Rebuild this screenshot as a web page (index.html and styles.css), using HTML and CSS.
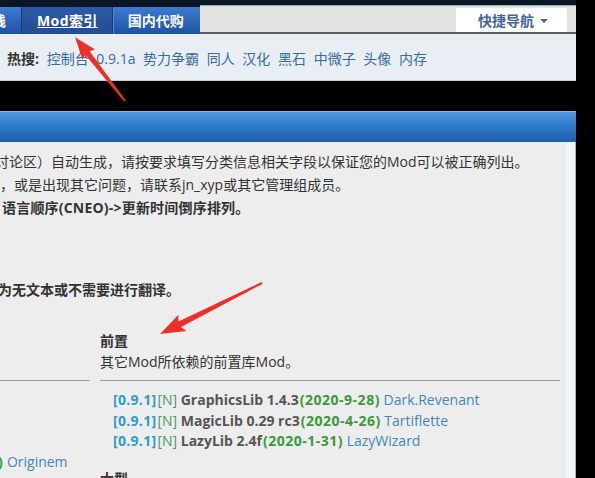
FILE: index.html
```html
<!DOCTYPE html>
<html lang="zh-CN">
<head>
  <meta charset="UTF-8">
  <meta name="viewport" content="width=device-width, initial-scale=1.0">
  <title>Mod索引</title>
  <link rel="stylesheet" href="styles.css">
</head>
<body>
  <div class="page">
    <div class="topline"></div>

    <!-- 主导航 -->
    <div class="nav">
      <ul class="nav-menu">
        <li class="cut"><a href="#">栈</a></li>
        <li class="active"><a href="#">Mod索引</a></li>
        <li><a href="#">国内代购</a></li>
      </ul>
      <div class="nav-side">
        <a href="#" class="quick-nav">快捷导航<span class="caret"></span></a>
      </div>
    </div>

    <!-- 热搜 -->
    <div class="hot">
      <strong>热搜:</strong>
      <a href="#">控制台</a>
      <a href="#">0.9.1a</a>
      <a href="#">势力争霸</a>
      <a href="#">同人</a>
      <a href="#">汉化</a>
      <a href="#">黑石</a>
      <a href="#">中微子</a>
      <a href="#">头像</a>
      <a href="#">内存</a>
    </div>

    <div class="title-bar"></div>

    <div class="content">
      <div class="main">
        <p class="line first">讨论区）自动生成，请按要求填写分类信息相关字段以保证您的Mod可以被正确列出。</p>
        <p class="line">，或是出现其它问题，请联系jn_xyp或其它管理组成员。</p>
        <p class="line bold third">语言顺序(CNEO)-&gt;更新时间倒序排列。</p>
        <p class="line bold note">为无文本或不需要进行翻译。</p>

        <div class="columns">
          <div class="col col-left">
            <hr>
            <ul class="mod-list">
              <li class="last"><span class="date">)</span> <a href="#" class="author">Originem</a></li>
            </ul>
          </div>
          <div class="col col-right">
            <h4>前置</h4>
            <p class="desc">其它Mod所依赖的前置库Mod。</p>
            <hr>
            <ul class="mod-list">
              <li><span class="ver">[0.9.1]</span><span class="tag">[N]</span> <b>GraphicsLib 1.4.3</b><span class="date">(2020-9-28)</span> <a href="#" class="author">Dark.Revenant</a></li>
              <li><span class="ver">[0.9.1]</span><span class="tag">[N]</span> <b>MagicLib 0.29 rc3</b><span class="date">(2020-4-26)</span> <a href="#" class="author">Tartiflette</a></li>
              <li><span class="ver">[0.9.1]</span><span class="tag">[N]</span> <b>LazyLib 2.4f</b><span class="date">(2020-1-31)</span> <a href="#" class="author">LazyWizard</a></li>
            </ul>
            <h4 class="next">大型</h4>
          </div>
        </div>
      </div>
    </div>
  </div>

  <!-- 标注箭头 -->
  <svg class="marks" width="595" height="478" viewBox="0 0 595 478">
    <polygon transform="translate(125 101) rotate(-128)" points="0,-1 61,-2.8 59,-8 81,0 59,8 61,2.8 0,1" />
    <polygon transform="translate(262 283) rotate(153.4)" points="0,-1 92,-3 89,-9 114,0 89,9 92,3 0,1" />
  </svg>
</body>
</html>
```

FILE: styles.css
```css
body {
  margin: 0;
  background: #000;
  font-family: "Open Sans", "Noto Sans CJK SC", sans-serif;
  font-size: 14px;
  color: #333;
  overflow: hidden;
}
a {
  text-decoration: none;
}
.page {
  width: 576px;
}
.topline {
  height: 7px;
  background: #0c1526;
}

/* 导航 */
.nav {
  display: flex;
  height: 27px;
}
.nav-menu {
  display: flex;
  margin: 0;
  padding: 0;
  list-style: none;
  width: 200px;
  background: linear-gradient(#3d7bcf, #2a62b6 60%, #1f52a3);
  overflow: hidden;
}
.nav-menu li {
  border-right: 1px solid #173a78;
  box-shadow: 1px 0 0 #4d86d2;
}
.nav-menu li:last-child {
  border-right: none;
  box-shadow: none;
  flex: 1;
}
.nav-menu a {
  display: block;
  padding: 0 14px 0 15px;
  line-height: 27px;
  color: #fff;
  font-weight: bold;
  font-size: 14px;
}
.nav-menu .cut a {
  margin-left: -8px;
  padding: 0 15px 0 0;
}
.nav-menu .active {
  background: linear-gradient(#2b5aa6, #234d94);
}
.nav-menu .active a {
  text-decoration: underline;
  padding-right: 14px;
  letter-spacing: 0.4px;
}
.nav-side {
  flex: 1;
  display: flex;
  justify-content: flex-end;
  align-items: flex-start;
  background: #e3e3e1;
  border-top: 1px solid #7dbab2;
  border-bottom: 2px solid #5c5c5c;
  margin-top: -2px;
  padding-right: 9px;
}
.quick-nav {
  display: flex;
  align-items: center;
  gap: 6px;
  width: 111px;
  height: 24px;
  margin-top: 2px;
  padding-left: 22px;
  box-sizing: border-box;
  background: #fff;
  color: #3f6699;
  font-weight: bold;
  font-size: 14px;
}
.caret {
  width: 0;
  height: 0;
  border-left: 4px solid transparent;
  border-right: 4px solid transparent;
  border-top: 4px solid #3f6699;
  margin-top: 2px;
}

/* 热搜 */
.hot {
  background: #e8eef4;
  border-bottom: 1px solid #c8cbcf;
  padding: 15px 0 11px 7px;
  line-height: 20px;
  margin-bottom: 30px;
}
.hot strong {
  margin-right: 4px;
}
.hot a {
  color: #3a6b9f;
  margin-right: 4px;
}

.title-bar {
  height: 31px;
  background: linear-gradient(#4f98e0, #2f7ccc 45%, #1f5eab);
  border-top: 1px solid #8ab8e8;
  box-sizing: border-box;
}

/* 内容 */
.content {
  background: #f2f5f9;
  border-right: 1px solid #9cb4d8;
  padding-right: 9px;
  height: 340px;
}
.main {
  background: #ededed;
  height: 100%;
  padding-top: 8px;
  box-sizing: border-box;
}
.line {
  margin: 0;
  line-height: 23px;
  white-space: nowrap;
}
.line.first {
  text-indent: -5px;
}
.line.third {
  padding-left: 2px;
  letter-spacing: 0.2px;
}
.line.note {
  margin-top: 59px;
  text-indent: -2px;
}
.bold {
  font-weight: bold;
}

.columns {
  display: flex;
  gap: 10px;
  margin-top: 29px;
}
.col-left {
  width: 90px;
}
.col-right {
  width: 460px;
}
.col h4 {
  margin: 0;
  font-size: 14px;
  line-height: 21px;
}
.col h4.next {
  margin-top: 16px;
}
.desc {
  margin: 0;
  line-height: 21px;
}
.col hr {
  margin: 8px 0 0;
  border: none;
  border-top: 1px solid #9a9a9a;
}
.col-left hr {
  margin-top: 50px;
}
.mod-list {
  list-style: none;
  margin: 9px 0 0;
  padding: 0 0 0 13px;
  line-height: 20.5px;
  white-space: nowrap;
}
.col-left .mod-list {
  padding-left: 0;
}
.mod-list li.last {
  padding-top: 61.5px;
  text-indent: -3px;
}
.ver {
  color: #3399cc;
  font-weight: bold;
  letter-spacing: 0.3px;
}
.tag {
  color: #4c9a62;
  margin-left: 1px;
}
.mod-list b {
  color: #555;
}
.date {
  color: #3c983c;
  font-weight: bold;
  letter-spacing: 0.5px;
  margin-left: 1px;
}
.author {
  color: #4585b8;
}

.marks {
  position: absolute;
  left: 0;
  top: 0;
  pointer-events: none;
}
.marks polygon {
  fill: #ec3028;
}
```
